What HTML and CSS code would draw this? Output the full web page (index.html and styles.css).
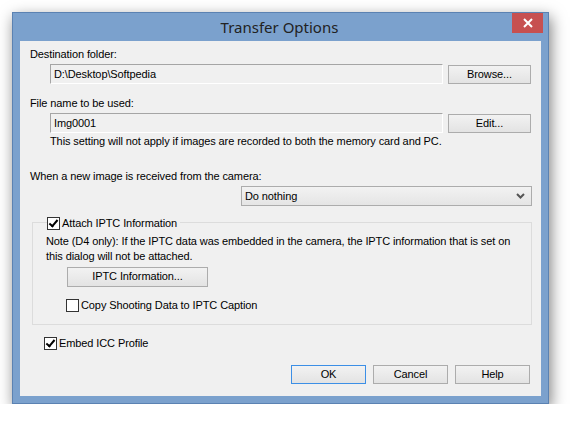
FILE: index.html
```html
<!DOCTYPE html>
<html>
<head>
  <title>Transfer Options</title>
  <link rel="stylesheet" href="styles.css">
</head>
<body>
  <div class="window">
    <div class="titlebar">
      <span></span>
      <span class="title">Transfer Options</span>
      <span class="close">
        <svg width="10" height="10" viewBox="0 0 10 10"><path d="M1 1 L9 9 M9 1 L1 9" stroke="#fff" stroke-width="2"/></svg>
      </span>
    </div>

    <div class="client">
      <div class="label">Destination folder:</div>
      <div class="row">
        <div class="field">D:\Desktop\Softpedia</div>
        <div class="btn btn-side">Browse...</div>
      </div>

      <div class="label label-2">File name to be used:</div>
      <div class="row">
        <div class="field">Img0001</div>
        <div class="btn btn-side">Edit...</div>
      </div>
      <div class="hint">This setting will not apply if images are recorded to both the memory card and PC.</div>

      <div class="label label-3">When a new image is received from the camera:</div>
      <div class="select-row">
        <div class="select">
          <span>Do nothing</span>
          <svg width="9" height="6" viewBox="0 0 9 6"><path d="M1 1 L4.5 4.5 L8 1" stroke="#555" stroke-width="2" fill="none"/></svg>
        </div>
      </div>

      <div class="group">
        <label class="check legend"><span class="box checked"></span>Attach IPTC Information</label>
        <p class="note">Note (D4 only): If the IPTC data was embedded in the camera, the IPTC information that is set on this dialog will not be attached.</p>
        <div class="btn btn-iptc">IPTC Information...</div>
        <label class="check copy"><span class="box"></span>Copy Shooting Data to IPTC Caption</label>
      </div>

      <label class="check embed"><span class="box checked"></span>Embed ICC Profile</label>

      <div class="actions">
        <div class="btn btn-default">OK</div>
        <div class="btn">Cancel</div>
        <div class="btn">Help</div>
      </div>
    </div>
  </div>
</body>
</html>
```

FILE: styles.css
```css
body {
  margin: 0;
  background: #fff;
  font-family: 'Liberation Sans', Arial, sans-serif;
  font-size: 11px;
  letter-spacing: -0.1px;
  color: #000;
}

.window {
  margin: 12px 0 0 12px;
  width: 521px;
  height: 383px;
  background: #7ba1cd;
  border: 1px solid #5b82b2;
  box-shadow: 2px 5px 14px rgba(0, 0, 0, 0.5);
  padding: 0 7px 7px 7px;
  display: flex;
  flex-direction: column;
}

.titlebar {
  height: 28px;
  display: grid;
  grid-template-columns: 1fr auto 1fr;
  align-items: start;
  margin: 0 -2px 0 -7px;
}

.title {
  font-family: 'Noto Sans', sans-serif;
  font-size: 15px;
  letter-spacing: 0;
  color: #222;
  line-height: 28px;
  padding-left: 3px;
}

.close {
  justify-self: end;
  width: 31px;
  height: 20px;
  background: #c75050;
  display: flex;
  align-items: center;
  justify-content: center;
}

.client {
  flex: 1;
  background: #f0f0f0;
  padding: 5px 10px 0 10px;
}

.label {
  line-height: 16px;
}

.label-2 {
  margin-top: 11px;
}

.label-3 {
  margin-top: 19px;
}

.row {
  display: flex;
  align-items: center;
  gap: 5px;
  margin: 2px 0 0 20px;
}

.field {
  width: 388px;
  height: 18px;
  line-height: 18px;
  padding-left: 3px;
  border-top: 1px solid #a5a5a5;
  border-left: 1px solid #a5a5a5;
  border-bottom: 1px solid #fff;
  border-right: 1px solid #fff;
}

.btn {
  height: 17px;
  line-height: 17px;
  text-align: center;
  border: 1px solid #acacac;
  background: linear-gradient(#f2f2f2, #e3e3e3);
  width: 73px;
}

.btn-side {
  width: 81px;
}

.hint {
  margin: 0 0 0 20px;
  line-height: 16px;
}

.select-row {
  display: flex;
  justify-content: flex-end;
  margin: 2px -1px 0 0;
}

.select {
  width: 280px;
  height: 18px;
  border: 1px solid #acacac;
  background: linear-gradient(#f2f2f2, #e5e5e5);
  display: flex;
  align-items: center;
  justify-content: space-between;
  padding: 0 6px 0 3px;
}

.group {
  margin: 16px -1px 0 2px;
  height: 101px;
  border: 1px solid #dcdcdc;
  padding: 0 0 0 13px;
}

.check {
  display: flex;
  align-items: center;
  gap: 2px;
  line-height: 16px;
}

.box {
  width: 11px;
  height: 11px;
  border: 1px solid #333;
  background: #fff;
  position: relative;
}

.box.checked::after {
  content: "";
  position: absolute;
  left: 3px;
  top: 0px;
  width: 3px;
  height: 7px;
  border: solid #000;
  border-width: 0 2px 2px 0;
  transform: rotate(40deg);
}

.legend {
  margin: -8px 0 0 1px;
  background: #f0f0f0;
  width: max-content;
  padding-right: 3px;
}

.note {
  margin: 3px 0 0 0;
  max-width: 474px;
  line-height: 15px;
}

.btn-iptc {
  width: 139px;
  height: 18px;
  margin: 3px 0 0 21px;
}

.copy {
  margin: 10px 0 0 20px;
}

.embed {
  margin: 10px 0 0 14px;
}

.actions {
  display: flex;
  justify-content: flex-end;
  gap: 7px;
  margin: 14px 1px 0 0;
}

.btn-default {
  border-color: #3c8fe6;
}
```
